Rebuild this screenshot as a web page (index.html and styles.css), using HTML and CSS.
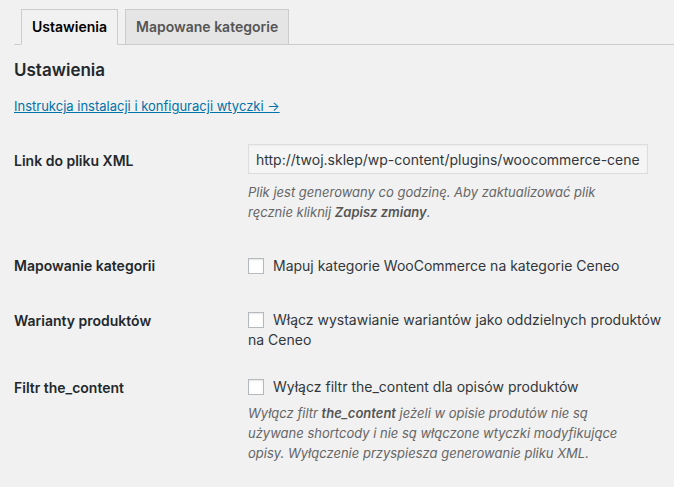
FILE: index.html
```html
<!DOCTYPE html>
<html lang="pl">
<head>
<meta charset="utf-8">
<title>Ustawienia</title>
<link rel="stylesheet" href="styles.css">
</head>
<body>
<div class="wrap">
  <nav class="tabs">
    <a class="tab tab-active" href="#">Ustawienia</a>
    <a class="tab" href="#">Mapowane kategorie</a>
  </nav>
  <h2 class="title">Ustawienia</h2>
  <p class="guide"><a href="#">Instrukcja instalacji i konfiguracji wtyczki →</a></p>

  <div class="row row-xml">
    <div class="label">Link do pliku XML</div>
    <div class="field">
      <input class="text-input" type="text" readonly value="http://twoj.sklep/wp-content/plugins/woocommerce-ceneo/xml/ceneo.xml">
      <p class="description">Plik jest generowany co godzinę. Aby zaktualizować plik<br>ręcznie kliknij <strong>Zapisz zmiany</strong>.</p>
    </div>
  </div>

  <div class="row row-map">
    <div class="label">Mapowanie kategorii</div>
    <div class="field">
      <label class="check"><input type="checkbox" class="box">Mapuj kategorie WooCommerce na kategorie Ceneo</label>
    </div>
  </div>

  <div class="row row-var">
    <div class="label">Warianty produktów</div>
    <div class="field">
      <label class="check"><input type="checkbox" class="box">Włącz wystawianie wariantów jako oddzielnych produktów<br>na Ceneo</label>
    </div>
  </div>

  <div class="row row-filter">
    <div class="label">Filtr the_content</div>
    <div class="field">
      <label class="check"><input type="checkbox" class="box">Wyłącz filtr the_content dla opisów produktów</label>
      <p class="description desc-tight">Wyłącz filtr <strong>the_content</strong> jeżeli w opisie produtów nie są<br>używane shortcody i nie są włączone wtyczki modyfikujące<br>opisy. Wyłączenie przyspiesza generowanie pliku XML.</p>
    </div>
  </div>
</div>
</body>
</html>
```

FILE: styles.css
```css
html, body {
  margin: 0;
  padding: 0;
  background: #f1f1f1;
}
body {
  font-family: Inter, Roboto, "Liberation Sans", sans-serif;
  font-size: 14px;
  color: #23282d;
  width: 674px;
  height: 487px;
  overflow: hidden;
}
.wrap {
  padding-left: 14px;
}
.tabs {
  display: flex;
  gap: 7px;
  padding-left: 7px;
  margin-top: 9px;
  border-bottom: 1px solid #ccc;
}
.tab {
  display: block;
  padding: 5px 10px;
  line-height: 24px;
  font-size: 14px;
  font-weight: 600;
  color: #555;
  background: #e5e5e5;
  border: 1px solid #ccc;
  margin-bottom: -1px;
  text-decoration: none;
}
.tab-active {
  background: #f1f1f1;
  color: #000;
  border-bottom-color: #f1f1f1;
}
.title {
  margin: 13px 0 0;
  font-size: 17px;
  line-height: 24px;
  font-weight: 600;
  color: #23282d;
}
.guide {
  margin: 14px 0 0;
  font-size: 13px;
  line-height: 20px;
}
.guide a {
  color: #0073aa;
  text-decoration: underline;
}
.row {
  display: grid;
  grid-template-columns: 234px 1fr;
}
.label {
  font-weight: 600;
  line-height: 20px;
  color: #23282d;
}
.field {
  min-width: 0;
}
.row-xml .label { padding-top: 35px; }
.row-xml .field { padding-top: 28px; }
.row-map .label { padding-top: 34px; }
.row-map .field { padding-top: 34px; }
.row-var .label { padding-top: 35px; }
.row-var .field { padding-top: 34px; }
.row-filter .label { padding-top: 29px; }
.row-filter .field { padding-top: 28px; }

.text-input {
  display: block;
  box-sizing: border-box;
  width: 400px;
  height: 30px;
  margin: 0;
  padding: 0 7px;
  border: 1px solid #ddd;
  background: #f5f5f5;
  box-shadow: inset 0 1px 2px rgba(0,0,0,0.04);
  font-family: inherit;
  font-size: 14px;
  color: #32373c;
  outline: none;
}
.description {
  margin: 8px 0 0;
  font-size: 13px;
  line-height: 20px;
  font-style: italic;
  color: #666;
}
.description strong {
  font-weight: 600;
  color: #555;
}
.desc-tight {
  margin-top: 6px;
}
.check {
  display: block;
  line-height: 19.5px;
  color: #32373c;
  white-space: nowrap;
}
.box {
  -webkit-appearance: none;
  appearance: none;
  box-sizing: border-box;
  width: 16px;
  height: 16px;
  margin: 0 9px 0 0;
  vertical-align: -3px;
  border: 1px solid #b4b9be;
  background: #fff;
  box-shadow: inset 0 1px 2px rgba(0,0,0,0.1);
  border-radius: 0;
}
```
